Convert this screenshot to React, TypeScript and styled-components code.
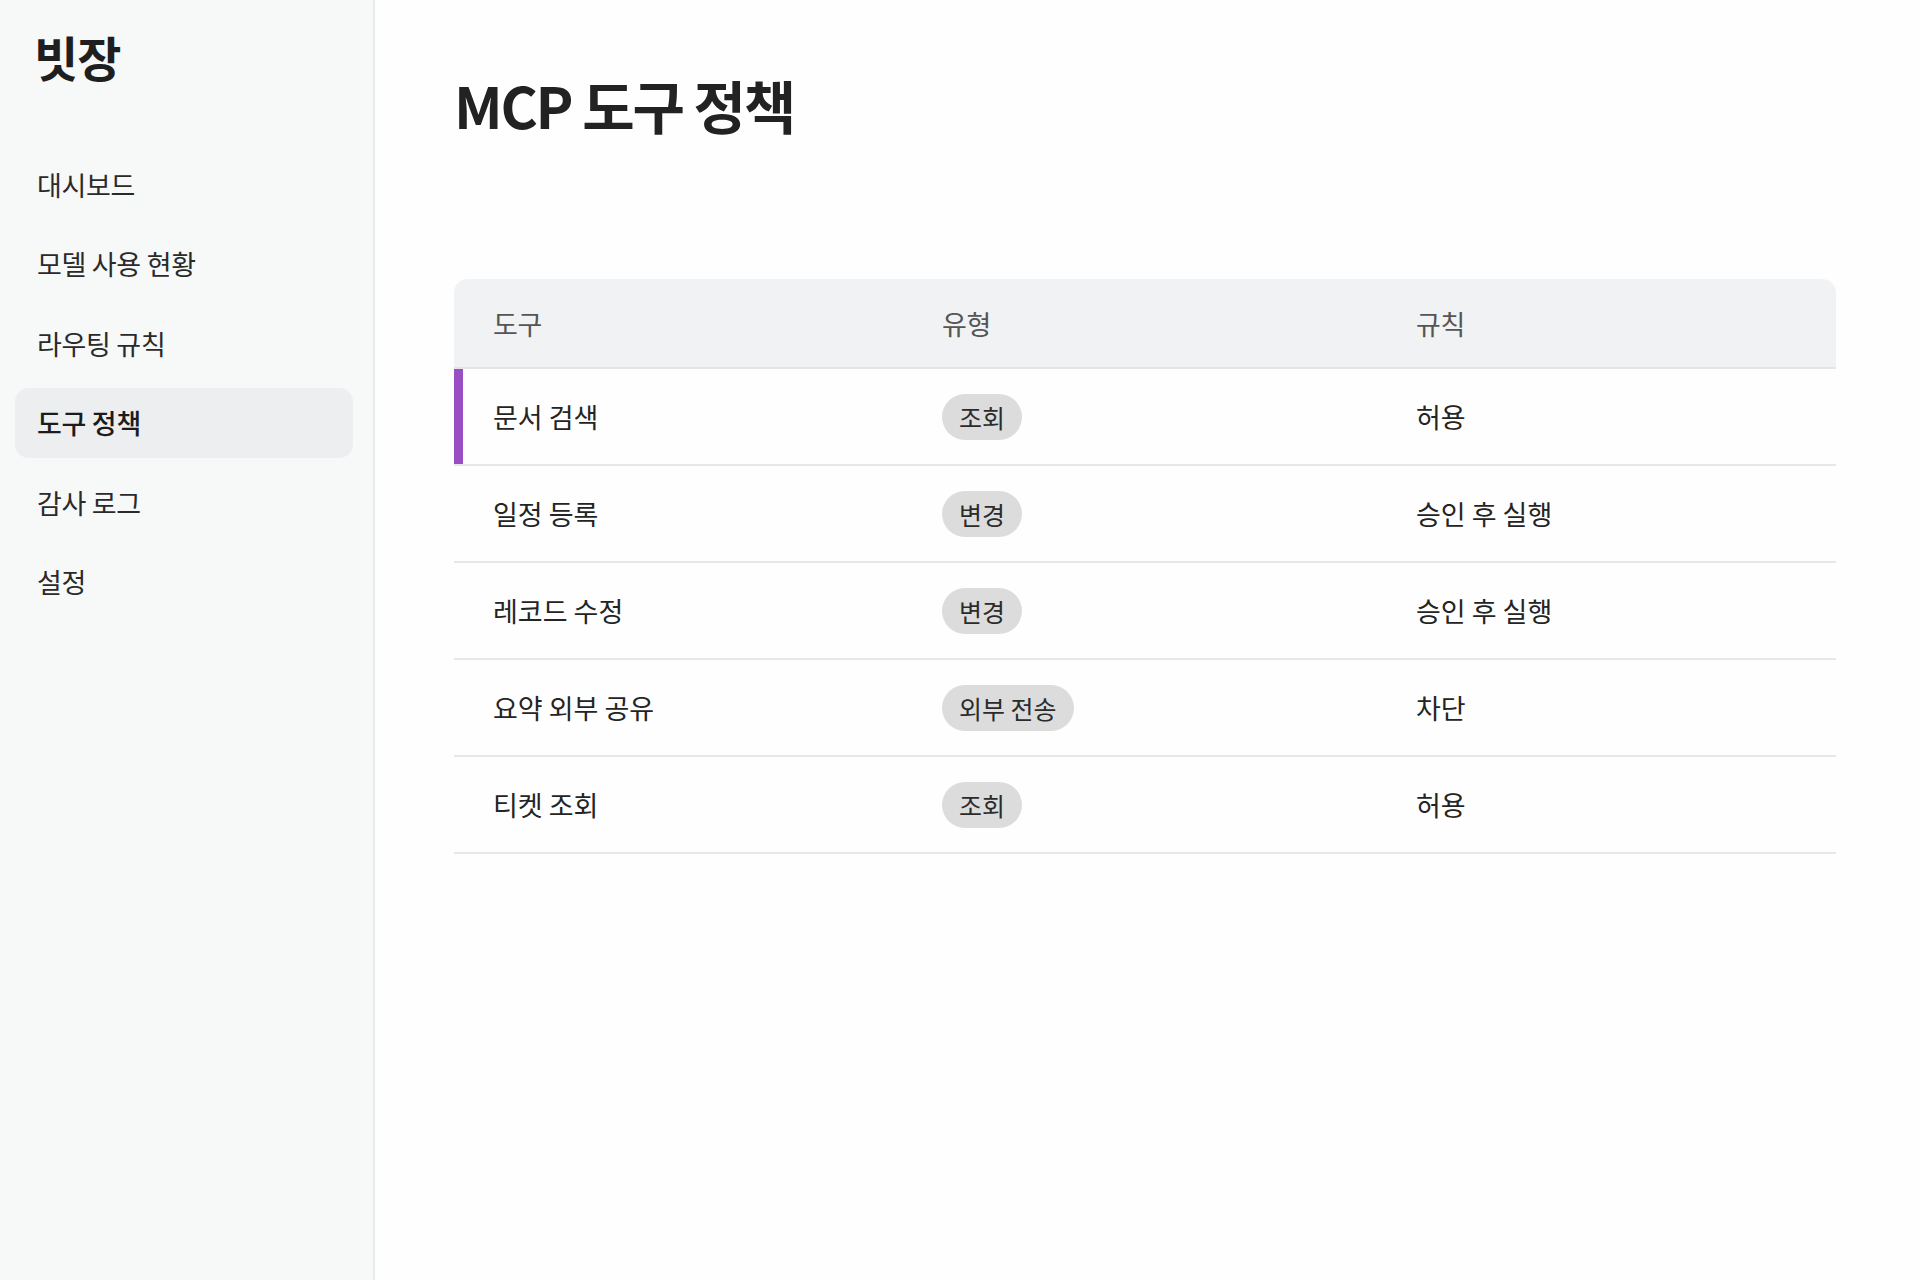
import React from 'react'
import styled, {createGlobalStyle} from 'styled-components'

const GlobalStyle = createGlobalStyle`
  html, body {
    margin: 0;
    padding: 0;
    background: #fefefe;
  }
  body {
    font-family: "Noto Sans CJK KR", "Noto Sans", sans-serif;
    color: #222;
  }
  * {
    box-sizing: border-box;
  }
`

const Layout = styled.div`
  display: flex;
  min-height: 1280px;
`

const Sidebar = styled.aside`
  flex: none;
  width: 375px;
  padding: 27px 20px 0 15px;
  background: #f7f8f8;
  border-right: 2px solid #e9eaea;
`

const Logo = styled.div`
  padding-left: 19px;
  font-size: 48px;
  line-height: 58px;
  font-weight: 700;
  letter-spacing: -1px;
  color: #1f1f1f;
`

const Nav = styled.nav`
  margin-top: 64px;
  display: flex;
  flex-direction: column;
  gap: 9.5px;
`

const NavItem = styled.div<{$active?: boolean}>`
  height: 70px;
  display: flex;
  align-items: center;
  padding-left: 22px;
  border-radius: 14px;
  font-size: 27px;
  letter-spacing: -0.3px;
  font-weight: ${p => (p.$active ? 500 : 400)};
  color: ${p => (p.$active ? '#1c1c1c' : '#2a2a2a')};
  background: ${p => (p.$active ? '#eceef0' : 'transparent')};
`

const Main = styled.main`
  flex: auto;
  padding: 70px 84px 0 79px;
`

const Title = styled.h1`
  margin: 0;
  font-size: 57px;
  line-height: 68px;
  font-weight: 700;
  letter-spacing: -2.2px;
  color: #222;
`

const Table = styled.div`
  margin-top: 141px;
`

const HeaderRow = styled.div`
  display: grid;
  grid-template-columns: 449px 474px 1fr;
  height: 90px;
  align-items: center;
  background: #f1f2f3;
  border-radius: 14px 14px 0 0;
  border-bottom: 2px solid #e4e5e6;
`

const HeaderCell = styled.div`
  padding-left: 39px;
  font-size: 27px;
  letter-spacing: -0.3px;
  color: #555;
`

const Row = styled.div`
  display: grid;
  grid-template-columns: 449px 474px 1fr;
  height: 97px;
  border-bottom: 2px solid #e6e7e8;
`

const Cell = styled.div<{$accent?: boolean}>`
  display: flex;
  align-items: center;
  padding-left: 39px;
  font-size: 27px;
  color: #242424;
  box-shadow: ${p => (p.$accent ? 'inset 9px 0 0 #9a4ec4' : 'none')};
`

const Badge = styled.span`
  display: inline-flex;
  align-items: center;
  height: 46px;
  padding: 0 17px;
  border-radius: 23px;
  background: #dcdcdd;
  font-size: 25px;
  color: #2b2b2b;
`

const navItems = ['대시보드', '모델 사용 현황', '라우팅 규칙', '도구 정책', '감사 로그', '설정']

const rows = [
  {tool: '문서 검색', type: '조회', rule: '허용'},
  {tool: '일정 등록', type: '변경', rule: '승인 후 실행'},
  {tool: '레코드 수정', type: '변경', rule: '승인 후 실행'},
  {tool: '요약 외부 공유', type: '외부 전송', rule: '차단'},
  {tool: '티켓 조회', type: '조회', rule: '허용'},
]

export default function App() {
  return (
    <>
      <GlobalStyle/>
      <Layout>
        <Sidebar>
          <Logo>빗장</Logo>
          <Nav>
            {navItems.map(item => (
              <NavItem key={item} $active={item === '도구 정책'}>{item}</NavItem>
            ))}
          </Nav>
        </Sidebar>
        <Main>
          <Title>MCP 도구 정책</Title>
          <Table>
            <HeaderRow>
              <HeaderCell>도구</HeaderCell>
              <HeaderCell>유형</HeaderCell>
              <HeaderCell>규칙</HeaderCell>
            </HeaderRow>
            {rows.map((row, i) => (
              <Row key={row.tool}>
                <Cell $accent={i === 0}>{row.tool}</Cell>
                <Cell><Badge>{row.type}</Badge></Cell>
                <Cell>{row.rule}</Cell>
              </Row>
            ))}
          </Table>
        </Main>
      </Layout>
    </>
  )
}
